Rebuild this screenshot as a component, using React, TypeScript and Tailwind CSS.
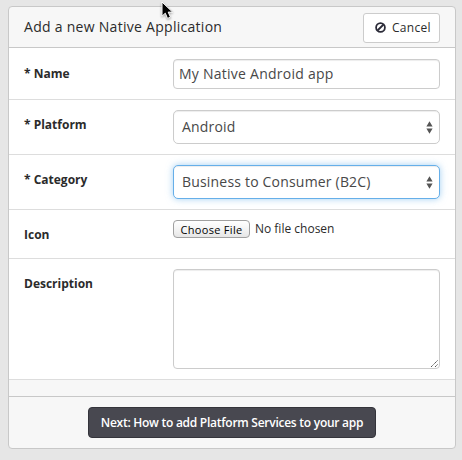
import React from "react";

function Row({ label, height, labelTop, controlTop, children }: {
  label: string;
  height: string;
  labelTop: string;
  controlTop: string;
  children: React.ReactNode;
}) {
  return (
    <div className={`flex border-b border-[#dddddd] pl-[15px] ${height}`}>
      <div className={`w-[149px] shrink-0 text-[12px] leading-5 font-bold text-[#2b2b2b] ${labelTop}`}>{label}</div>
      <div className={`w-[267px] ${controlTop}`}>{children}</div>
    </div>
  );
}

function Select({ value, focused }: { value: string; focused?: boolean }) {
  const border = focused
    ? "border-[#66afe9] shadow-[inset_0_1px_1px_rgba(0,0,0,0.075),0_0_7px_rgba(102,175,233,0.6)]"
    : "border-[#cccccc] shadow-[inset_0_1px_1px_rgba(0,0,0,0.075)]";
  return (
    <div className={`flex h-[34px] items-center justify-between rounded-[5px] border bg-white pr-[6px] pl-2 text-[14px] tracking-[0.19px] text-[#484848] ${border}`}>
      <span className="leading-5">{value}</span>
      <svg width="7" height="13" viewBox="0 0 7 13" fill="#555555">
        <path d="M3.5 0.2L6.6 5.6H.4zM.4 7.4h6.2L3.5 12.8z" />
      </svg>
    </div>
  );
}

export default function App() {
  return (
    <div className="relative h-[460px] w-[462px] overflow-hidden bg-[#e6e6e6] pt-[6px] pl-2 font-['Open_Sans','Noto_Sans',sans-serif] text-[#2b2b2b]">
      <div className="h-[443px] w-[448px] overflow-hidden rounded-[4px] border border-[#c8c8c8] bg-[#f7f7f7]">
        <div className="flex h-[41px] items-start justify-between border-b border-[#c8c8c8] pt-[6px] pr-[15px] pl-[15px]">
          <h1 className="pt-1 text-[14px] leading-5 tracking-[0.28px]">Add a new Native Application</h1>
          <button className="flex h-[30px] w-[77px] items-center rounded-[3px] border border-[#cccccc] bg-white pl-[11px] text-[12px] text-[#2b2b2b]">
            <svg className="mb-px" width="11" height="11" viewBox="0 0 11 11" fill="none" stroke="#2b2b38" strokeWidth="1.8">
              <circle cx="5.5" cy="5.5" r="4.4" />
              <path d="M2.5 8.5l6-6" />
            </svg>
            <span className="ml-[6px] tracking-[0.3px]">Cancel</span>
          </button>
        </div>
        <div className="bg-white">
          <Row label="* Name" height="h-[52px]" labelTop="pt-4" controlTop="pt-[11px]">
            <input
              className="block h-[30px] w-full rounded-[4px] border border-[#cccccc] bg-white pr-[6px] pb-[2px] pl-[5px] text-[14px] tracking-[0.25px] text-[#484848] shadow-[inset_0_1px_1px_rgba(0,0,0,0.075)] outline-none"
              defaultValue="My Native Android app"
            />
          </Row>
          <Row label="* Platform" height="h-[55px]" labelTop="pt-[15px]" controlTop="pt-[10px]">
            <Select value="Android" />
          </Row>
          <Row label="* Category" height="h-[55px]" labelTop="pt-[15px]" controlTop="pt-[10px]">
            <Select value="Business to Consumer (B2C)" focused />
          </Row>
          <Row label="Icon" height="h-[49px]" labelTop="pt-[15px]" controlTop="pt-[10px]">
            <div className="flex items-start">
              <button className="h-[18px] w-[77px] rounded-[4px] border border-[#a0a0a0] bg-linear-to-b from-white via-[#f4f4f4] to-[#e6e6e6] pt-px text-[11px] leading-[15px] tracking-[0.3px] whitespace-nowrap text-black">
                Choose File
              </button>
              <span className="ml-[5px] text-[12px] leading-[18px]">No file chosen</span>
            </div>
          </Row>
          <Row label="Description" height="h-[121px]" labelTop="pt-[15px]" controlTop="pt-[10px]">
            <div className="flex h-[100px] items-end justify-end rounded-[4px] border border-[#cccccc] bg-white shadow-[inset_0_1px_1px_rgba(0,0,0,0.075)]">
              <svg width="9" height="9" viewBox="0 0 9 9" stroke="#555555" strokeWidth="1" strokeDasharray="1.4 .5">
                <path d="M1 8L8 1M5 8l3-3" />
              </svg>
            </div>
          </Row>
        </div>
        <div className="h-[17px] border-b border-[#c8c8c8]" />
        <div className="flex pt-[10px] pl-[79px]">
          <button className="h-[31px] w-[288px] rounded-[4px] border border-[#34343b] bg-[#484850] text-[12px] font-semibold tracking-[-0.26px] whitespace-nowrap text-white">
            Next: How to add Platform Services to your app
          </button>
        </div>
      </div>
      <svg className="absolute top-0 left-[158px] drop-shadow-[0_1px_1px_rgba(0,0,0,0.35)]" width="18" height="22" viewBox="0 0 18 22">
        <path d="M4 2v14.2l3.3-3 2.2 5.2 3-1.2-2.3-5.1h4.4z" fill="#000" stroke="#fff" strokeWidth="1" />
      </svg>
    </div>
  );
}
